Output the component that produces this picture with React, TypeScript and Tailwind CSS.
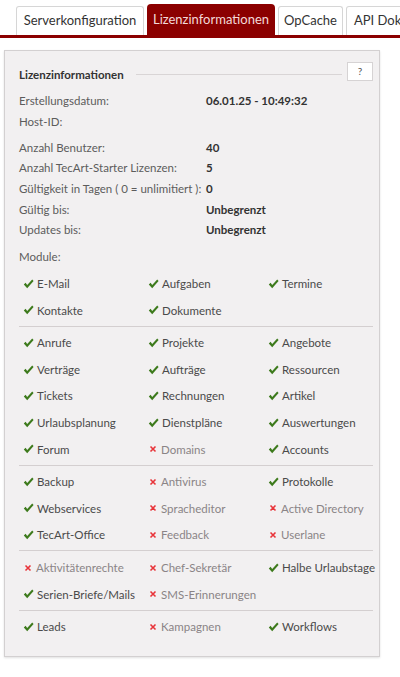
// License info panel with tab bar
const font = { fontFamily: 'Lato, "Open Sans", sans-serif' };

type Mod = [string, boolean];

const groups: (Mod | null)[][] = [
  [['E-Mail', true], ['Aufgaben', true], ['Termine', true], ['Kontakte', true], ['Dokumente', true], null],
  [
    ['Anrufe', true], ['Projekte', true], ['Angebote', true],
    ['Verträge', true], ['Aufträge', true], ['Ressourcen', true],
    ['Tickets', true], ['Rechnungen', true], ['Artikel', true],
    ['Urlaubsplanung', true], ['Dienstpläne', true], ['Auswertungen', true],
    ['Forum', true], ['Domains', false], ['Accounts', true],
  ],
  [
    ['Backup', true], ['Antivirus', false], ['Protokolle', true],
    ['Webservices', true], ['Spracheditor', false], ['Active Directory', false],
    ['TecArt-Office', true], ['Feedback', false], ['Userlane', false],
  ],
  [
    ['Aktivitätenrechte', false], ['Chef-Sekretär', false], ['Halbe Urlaubstage', true],
    ['Serien-Briefe/Mails', true], ['SMS-Erinnerungen', false], null,
  ],
  [['Leads', true], ['Kampagnen', false], ['Workflows', true]],
];

const info: [string, string][] = [
  ['Erstellungsdatum:', '06.01.25 - 10:49:32'],
  ['Host-ID:', ''],
];
const info2: [string, string][] = [
  ['Anzahl Benutzer:', '40'],
  ['Anzahl TecArt-Starter Lizenzen:', '5'],
  ['Gültigkeit in Tagen ( 0 = unlimitiert ):', '0'],
  ['Gültig bis:', 'Unbegrenzt'],
  ['Updates bis:', 'Unbegrenzt'],
];

function Check() {
  return (
    <svg width="11" height="10" viewBox="0 0 11 10" className="shrink-0">
      <path d="M0.8 5.4 L2.6 3.8 L4.2 5.9 L9.2 0.6 L10.6 1.9 L4.2 9.2 Z" fill="#3d7a1c" />
    </svg>
  );
}

function Cross() {
  return (
    <svg width="8" height="8" viewBox="0 0 8 8" className="shrink-0 mx-[1px]">
      <path d="M1.5 1.5 L6.5 6.5 M6.5 1.5 L1.5 6.5" stroke="#e8343a" strokeWidth="1.6" />
    </svg>
  );
}

function ModuleCell({ m }: { m: Mod | null }) {
  if (!m) return <div />;
  const [name, on] = m;
  return (
    <div className="flex items-center gap-[3px] h-[26.6px] whitespace-nowrap">
      {on ? <Check /> : <Cross />}
      <span className={on ? 'text-[#4a4a4a]' : 'text-[#8a8486]'}>{name}</span>
    </div>
  );
}

export default function App() {
  return (
    <div className="min-h-screen bg-white text-[11.5px]" style={font}>
      {/* tabs */}
      <div className="flex items-end gap-[3px] pl-4 pt-1 border-b-[3px] border-[#8b0000] overflow-hidden h-[38px]">
        <div className="h-[29px] w-[128px] shrink-0 flex items-center justify-center bg-white border border-b-0 border-[#d6d6d6] rounded-t-[3px] text-[13px] text-[#333] whitespace-nowrap">
          Serverkonfiguration
        </div>
        <div className="h-[31px] w-[128px] shrink-0 flex items-center justify-center bg-[#8b0000] rounded-t-[4px] text-[13px] text-[#f3d9d9] whitespace-nowrap">
          Lizenzinformationen
        </div>
        <div className="h-[29px] w-[65px] shrink-0 flex items-center justify-center bg-white border border-b-0 border-[#d6d6d6] rounded-t-[3px] text-[13px] text-[#333] whitespace-nowrap">
          OpCache
        </div>
        <div className="h-[29px] shrink-0 pl-[7px] flex items-center bg-white border border-b-0 border-[#d6d6d6] rounded-t-[3px] text-[13px] text-[#333] whitespace-nowrap">
          API Dokumentation
        </div>
      </div>

      {/* panel */}
      <div className="mt-[12px] ml-[4px] w-[376px] h-[607px] bg-[#f2f0f1] border border-[#d3d0d1] shadow-[0_1px_2px_rgba(0,0,0,0.12)] pl-[14px] pr-[6px] pt-[14px]">
        <div className="flex items-center h-[19px]">
          <span className="font-bold text-[#333] mr-3">Lizenzinformationen</span>
          <div className="flex-1 h-px bg-[#d9d5d6]" />
          <div className="ml-[5px] w-[26px] h-[19px] bg-white border border-[#d6d3d4] flex items-center justify-center text-[10px] text-[#555] -mt-[6px]">
            ?
          </div>
        </div>

        <div className="mt-[6px]">
          {info.map(([k, v]) => (
            <div key={k} className="flex h-[21px] items-center">
              <span className="w-[187px] text-[#5c5c5c]">{k}</span>
              <span className="font-bold text-[#333]">{v}</span>
            </div>
          ))}
        </div>
        <div className="mt-[5px]">
          {info2.map(([k, v]) => (
            <div key={k} className="flex h-[20.7px] items-center">
              <span className="w-[187px] text-[#5c5c5c] whitespace-nowrap">{k}</span>
              <span className="font-bold text-[#333]">{v}</span>
            </div>
          ))}
        </div>
        <div className="mt-[6px] h-[21px] flex items-center text-[#5c5c5c]">Module:</div>

        <div className="mt-[3px]">
          {groups.map((g, i) => (
            <div key={i} className={i > 0 ? 'border-t border-[#d4cfd0] pt-[3px] mt-[2px]' : ''}>
              <div className="grid grid-cols-[125px_120px_1fr] pl-[4px]">
                {g.map((m, j) => (
                  <ModuleCell key={j} m={m} />
                ))}
              </div>
            </div>
          ))}
        </div>
      </div>
    </div>
  );
}
